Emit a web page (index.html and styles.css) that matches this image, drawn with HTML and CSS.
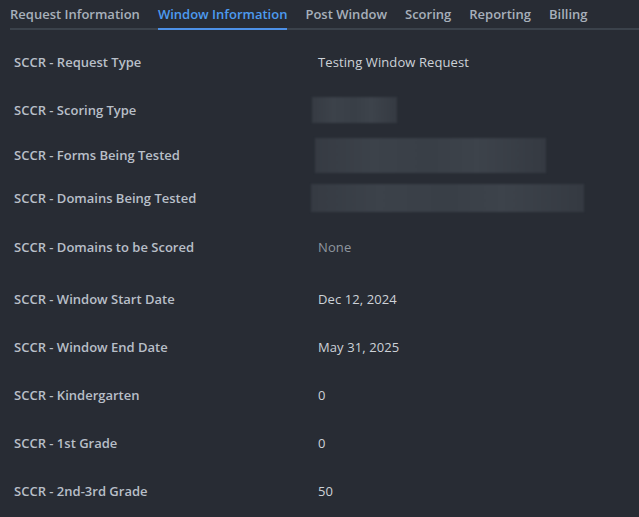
FILE: index.html
```html
<!DOCTYPE html>
<html>
<head>
<meta charset="utf-8">
<link rel="stylesheet" href="styles.css">
</head>
<body>
<div class="tabs">
  <div class="tab">Request Information</div>
  <div class="tab active">Window Information</div>
  <div class="tab">Post Window</div>
  <div class="tab">Scoring</div>
  <div class="tab">Reporting</div>
  <div class="tab">Billing</div>
</div>
<div class="rows">
  <div class="row h48"><div class="label">SCCR - Request Type</div><div class="value">Testing Window Request</div></div>
  <div class="row h47"><div class="label">SCCR - Scoring Type</div><div class="value"><div class="blur b1"></div></div></div>
  <div class="row h44"><div class="label">SCCR - Forms Being Tested</div><div class="value"><div class="blur b2"></div></div></div>
  <div class="row h41"><div class="label">SCCR - Domains Being Tested</div><div class="value"><div class="blur b3"></div></div></div>
  <div class="row h58"><div class="label">SCCR - Domains to be Scored</div><div class="value muted">None</div></div>
  <div class="row h46"><div class="label">SCCR - Window Start Date</div><div class="value">Dec 12, 2024</div></div>
  <div class="row h49"><div class="label">SCCR - Window End Date</div><div class="value">May 31, 2025</div></div>
  <div class="row h48"><div class="label">SCCR - Kindergarten</div><div class="value">0</div></div>
  <div class="row h48"><div class="label">SCCR - 1st Grade</div><div class="value">0</div></div>
  <div class="row h48"><div class="label">SCCR - 2nd-3rd Grade</div><div class="value">50</div></div>
</div>
</body>
</html>
```
FILE: styles.css
```css
html, body {
  margin: 0;
  padding: 0;
  background: #282c34;
  height: 100%;
  overflow: hidden;
}
body {
  font-family: "Open Sans", "Noto Sans", sans-serif;
  color: #c3c9d1;
}
.tabs {
  display: flex;
  gap: 18px;
  margin-left: 10px;
  border-bottom: 2px solid #3b424b;
  height: 28px;
}
.tab {
  font-size: 13px;
  font-weight: 600;
  color: #a7b0bb;
  line-height: 28px;
  margin-bottom: -2px;
  border-bottom: 2px solid transparent;
}
.tab.active {
  color: #4d9bf0;
  border-bottom-color: #4d90e6;
}
.rows {
  padding-top: 8px;
}
.row {
  display: flex;
  align-items: center;
  padding-left: 14px;
}
.h41 { height: 41px; }
.h44 { height: 44px; }
.h46 { height: 46px; }
.h47 { height: 47px; }
.h48 { height: 48px; }
.h49 { height: 49px; }
.h58 { height: 58px; }
.label {
  width: 304px;
  font-size: 13px;
  font-weight: 600;
  color: #b8bfc8;
}
.value {
  font-size: 13px;
  color: #cdd2d8;
  letter-spacing: 0.1px;
}
.value.muted {
  color: #8f969f;
}
.blur {
  background: linear-gradient(90deg, #363b43 0%, #3c424a 25%, #393f47 50%, #3d434b 70%, #353a42 100%);
  filter: blur(1px);
}
.b1 { width: 85px; height: 26px; margin-left: -6px; }
.b2 { width: 231px; height: 35px; margin-left: -3px; }
.b3 { width: 273px; height: 28px; margin-left: -7px; }
```
